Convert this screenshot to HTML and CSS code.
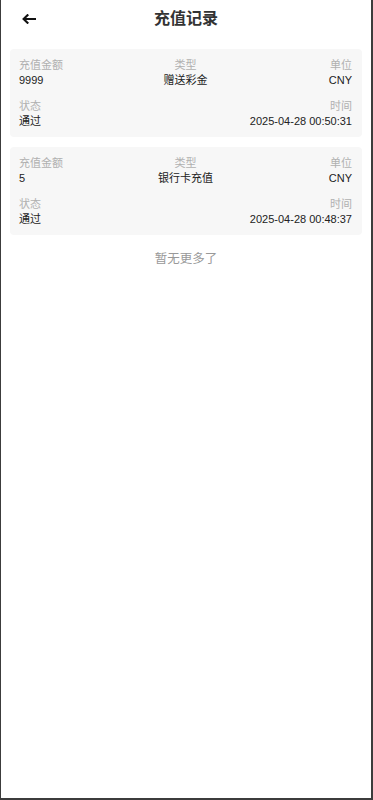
FILE: index.html
```html
<!DOCTYPE html>
<html lang="zh-CN">
<head>
<meta charset="utf-8">
<meta name="viewport" content="width=device-width, initial-scale=1">
<title>充值记录</title>
<link rel="stylesheet" href="styles.css">
</head>
<body>
<div class="frame">
  <header class="topbar">
    <span class="back">
      <svg width="14" height="10" viewBox="0 0 14 10" aria-hidden="true">
        <path d="M13 5H2.2M5.5 1.2L1.6 5l3.9 3.8" fill="none" stroke="#111" stroke-width="2.1" stroke-linecap="square" stroke-linejoin="miter"/>
      </svg>
    </span>
    <h1 class="title">充值记录</h1>
  </header>
  <main class="list">
    <section class="card">
      <div class="row">
        <div class="cell left"><div class="label">充值金额</div><div class="value">9999</div></div>
        <div class="cell center"><div class="label">类型</div><div class="value">赠送彩金</div></div>
        <div class="cell right"><div class="label">单位</div><div class="value">CNY</div></div>
      </div>
      <div class="row">
        <div class="cell left"><div class="label">状态</div><div class="value">通过</div></div>
        <div class="cell right wide"><div class="label">时间</div><div class="value">2025-04-28 00:50:31</div></div>
      </div>
    </section>
    <section class="card">
      <div class="row">
        <div class="cell left"><div class="label">充值金额</div><div class="value">5</div></div>
        <div class="cell center"><div class="label">类型</div><div class="value">银行卡充值</div></div>
        <div class="cell right"><div class="label">单位</div><div class="value">CNY</div></div>
      </div>
      <div class="row">
        <div class="cell left"><div class="label">状态</div><div class="value">通过</div></div>
        <div class="cell right wide"><div class="label">时间</div><div class="value">2025-04-28 00:48:37</div></div>
      </div>
    </section>
    <p class="nomore">暂无更多了</p>
  </main>
</div>
</body>
</html>
```

FILE: styles.css
```css
* { box-sizing: border-box; }
html, body { margin: 0; padding: 0; background: #fff; }
body {
  font-family: "Liberation Sans", Arial, "Noto Sans CJK SC", sans-serif;
  color: #222;
}
.frame {
  height: 800px;
  border-left: 1px solid #3c3c3c;
  border-right: 2px solid #3c3c3c;
  border-bottom: 2px solid #3c3c3c;
  background: #fff;
  overflow: hidden;
}
.topbar {
  position: relative;
  height: 40px;
  display: flex;
  align-items: center;
  justify-content: center;
}
.back {
  position: absolute;
  left: 21px;
  top: 14px;
  width: 14px;
  height: 10px;
  display: flex;
}
.title {
  margin: 0;
  font-size: 16px;
  font-weight: 700;
  color: #333;
  line-height: 20px;
  padding-bottom: 3px;
}
.list {
  padding: 9px 9px 0 9px;
}
.card {
  background: #f7f7f7;
  border-radius: 4px;
  padding: 9px 10px 8px 9px;
  margin-bottom: 10px;
}
.row {
  display: flex;
  justify-content: space-between;
}
.row + .row { margin-top: 11px; }
.cell { flex: 1; font-size: 11px; line-height: 15px; }
.cell.left { text-align: left; }
.cell.center { text-align: center; }
.cell.right { text-align: right; }
.cell.wide { flex: 2; }
.label { color: #b0b0b0; }
.value { color: #222; }
.nomore {
  margin: 14px 0 0 0;
  text-align: center;
  font-size: 12.5px;
  line-height: 20px;
  color: #999;
}
```
